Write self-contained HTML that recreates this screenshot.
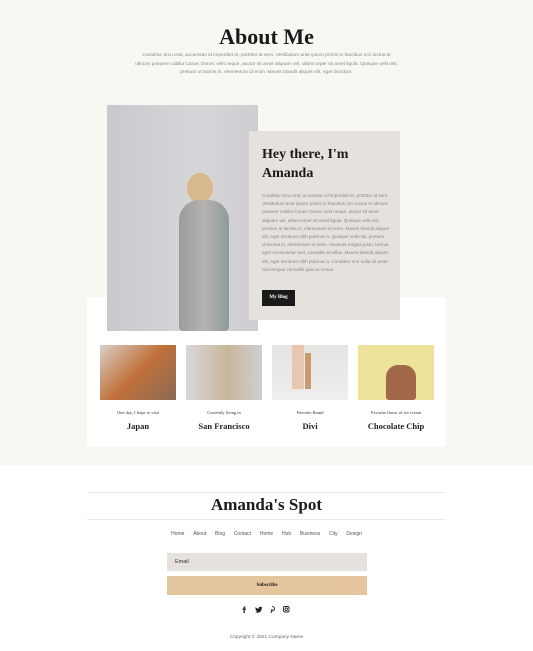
<!DOCTYPE html>
<html><head><meta charset="utf-8"><style>
*{margin:0;padding:0;box-sizing:border-box}
body{width:533px;height:651px;background:#fff;font-family:"Liberation Sans",sans-serif;position:relative;overflow:hidden}
.abs{position:absolute}
.serif{font-family:"Liberation Serif",serif;color:#1a1a1a}
.top{left:0;top:0;width:533px;height:465px;background:#f9f7f2}
.p{font-size:5px;color:#888;line-height:8.2px}
.lab{font-size:4.5px;text-align:center;width:76px;color:#333;font-family:"Liberation Serif",serif}
.tt{font-size:8.5px;font-weight:bold;text-align:center;width:76px;font-family:"Liberation Serif",serif;color:#222}
.nav{font-size:5px;color:#555}
</style></head><body>
<div class="abs top"></div>
<div class="abs serif" style="left:0;width:533px;top:24px;text-align:center;font-size:22px;font-weight:bold">About Me</div>
<div class="abs p" style="left:135px;width:263px;top:52px;text-align:center;font-size:4.8px;line-height:8.5px">Curabitur arcu erat, accumsan id imperdiet et, porttitor at sem. Vestibulum ante ipsum primis in faucibus orci luctus et ultrices posuere cubilia Curae; Donec velit neque, auctor sit amet aliquam vel, ullamcorper sit amet ligula. Quisque velit nisi, pretium ut lacinia in, elementum id enim. Mauris blandit aliquet elit, eget tincidunt.</div>
<div class="abs" style="left:87px;top:297px;width:359px;height:150px;background:#fff"></div>
<div class="abs" style="left:107px;top:105px;width:151px;height:226px;background:linear-gradient(90deg,#c9c8cc,#d6d5d8 60%,#cfcdd0)">
<div class="abs" style="left:80px;top:68px;width:26px;height:30px;border-radius:50%;background:#d8b98e"></div>
<div class="abs" style="left:72px;top:95px;width:50px;height:131px;border-radius:20px 20px 4px 4px;background:linear-gradient(90deg,#9e9c9a,#b5b3b0,#8f9a9a)"></div>
</div>
<div class="abs" style="left:249px;top:131px;width:151px;height:189px;background:#e5e2dd"></div>
<div class="abs serif" style="left:262px;top:145px;font-size:14px;line-height:19px;font-weight:bold;width:130px">Hey there, I'm Amanda</div>
<div class="abs p" style="left:262px;top:192px;width:127px;font-size:4.6px">Curabitur arcu erat, accumsan id imperdiet et, porttitor at sem. Vestibulum ante ipsum primis in faucibus orci luctus et ultrices posuere cubilia Curae; Donec velit neque, auctor sit amet aliquam vel, ullamcorper sit amet ligula. Quisque velit nisi, pretium ut lacinia in, elementum id enim. Mauris blandit aliquet elit, eget tincidunt nibh pulvinar a. Quisque velit nisi, pretium ut lacinia in, elementum id enim. Vivamus magna justo, lacinia eget consectetur sed, convallis at tellus. Mauris blandit aliquet elit, eget tincidunt nibh pulvinar a. Curabitur non nulla sit amet nisl tempus convallis quis ac lectus.</div>
<div class="abs serif" style="left:262px;top:290px;width:33px;height:16px;background:#1a1a1a;color:#fff;font-size:5px;font-weight:bold;text-align:center;line-height:16px">My Blog</div>

<div class="abs" style="left:100px;top:345px;width:76px;height:55px;background:linear-gradient(135deg,#d9cfc6,#c0703a 50%,#8a6a55)"></div>
<div class="abs" style="left:186px;top:345px;width:76px;height:55px;background:linear-gradient(90deg,#d8d8da,#c8b59a 55%,#d0d0d2)"></div>
<div class="abs" style="left:272px;top:345px;width:76px;height:55px;background:linear-gradient(180deg,#e6e4e2,#f0eeec)"><div class="abs" style="left:20px;top:0;width:12px;height:44px;background:#e8c6b2"></div><div class="abs" style="left:33px;top:8px;width:6px;height:36px;background:#c89a70"></div></div>
<div class="abs" style="left:358px;top:345px;width:76px;height:55px;background:#ede39b"><div class="abs" style="left:28px;top:20px;width:30px;height:35px;border-radius:12px 12px 3px 3px;background:#a2684a"></div></div>

<div class="abs lab" style="left:100px;top:410px">One day, I hope to visit</div>
<div class="abs lab" style="left:186px;top:410px">Currently living in</div>
<div class="abs lab" style="left:272px;top:410px">Favorite Brand</div>
<div class="abs lab" style="left:358px;top:410px">Favorite flavor of ice cream</div>
<div class="abs tt" style="left:100px;top:421px">Japan</div>
<div class="abs tt" style="left:186px;top:421px">San Francisco</div>
<div class="abs tt" style="left:272px;top:421px">Divi</div>
<div class="abs tt" style="left:358px;top:421px">Chocolate Chip</div>

<div class="abs" style="left:87px;top:492px;width:359px;height:1px;background:#ececec"></div>
<div class="abs serif" style="left:0;width:533px;top:495px;text-align:center;font-size:17px;font-weight:bold">Amanda's Spot</div>
<div class="abs" style="left:87px;top:519px;width:359px;height:1px;background:#ececec"></div>
<div class="abs nav" style="left:0;width:533px;top:531px;text-align:center;word-spacing:3px">Home &nbsp;About &nbsp;Blog &nbsp;Contact &nbsp;Home &nbsp;Hub &nbsp;Business &nbsp;City &nbsp;Design</div>
<div class="abs" style="left:167px;top:553px;width:200px;height:18px;background:#e5e2dd;font-size:5.5px;color:#333;line-height:18px;padding-left:8px">Email</div>
<div class="abs serif" style="left:167px;top:576px;width:200px;height:19px;background:#e5c59e;font-size:5px;font-weight:bold;text-align:center;line-height:19px">Subscribe</div>
<svg class="abs" style="left:240px;top:605px" width="56" height="9" viewBox="0 0 56 9">
<path d="M5.5 1.5h-1c-.8 0-1 .4-1 1v1h-1v1.2h1V8h1.3V4.7h1l.2-1.2H4.8v-.8c0-.3.1-.4.4-.4h.7z" fill="#222"/>
<path d="M22.5 2.5c-.3.1-.6.2-.9.2.3-.2.6-.5.7-.8-.3.2-.6.3-1 .4a1.5 1.5 0 0 0-2.6 1.4c-1.3-.1-2.4-.7-3.1-1.6-.4.7-.2 1.5.5 2-.2 0-.5-.1-.7-.2 0 .7.5 1.3 1.2 1.5-.2.1-.5.1-.7 0 .2.6.8 1 1.4 1-.6.5-1.4.7-2.2.6.7.4 1.5.7 2.3.7 2.8 0 4.4-2.3 4.3-4.5.3-.2.6-.4.8-.7z" fill="#222"/>
<path d="M31 8l1-4M32.2 1.5a2.2 2.2 0 0 1 0 4.4c-.6 0-1-.3-1-.3" stroke="#222" stroke-width="1" fill="none"/>
<rect x="43.5" y="1.5" width="5.5" height="5.5" rx="1.3" stroke="#222" stroke-width=".9" fill="none"/><circle cx="46.25" cy="4.25" r="1.3" stroke="#222" stroke-width=".8" fill="none"/>
</svg>
<div class="abs nav" style="left:0;width:533px;top:635px;text-align:center;font-size:4.8px;color:#666">Copyright © 2021 Company Name</div>
</body></html>
